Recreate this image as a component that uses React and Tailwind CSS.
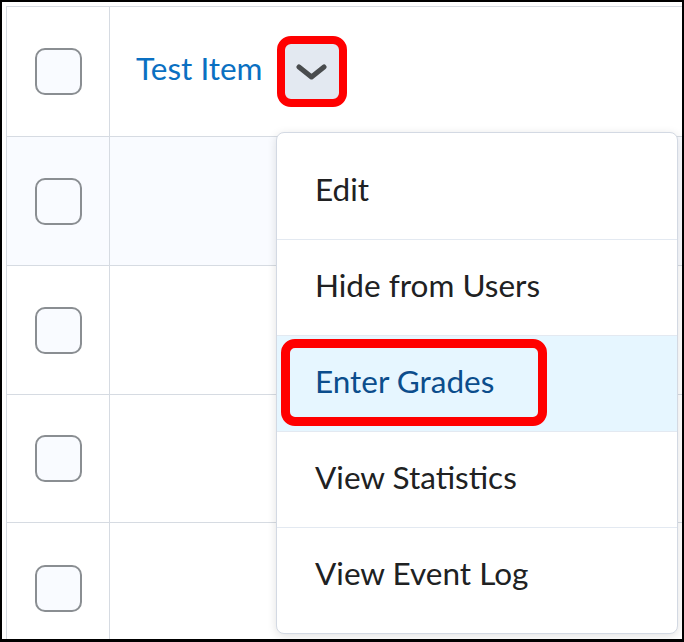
import React from "react";

const rows = [
  { h: "h-[130px]", bg: "bg-white", first: true },
  { h: "h-[129px]", bg: "bg-[#f9fbff]" },
  { h: "h-[129px]", bg: "bg-white" },
  { h: "h-[128px]", bg: "bg-white" },
  { h: "h-[131px]", bg: "bg-white", last: true },
];

function Checkbox() {
  return (
    <div className="w-[47px] h-[47px] rounded-[10px] border-2 border-[#8a8e92] bg-[#f9fbff]" />
  );
}

function Chevron() {
  return (
    <svg width="31" height="17" viewBox="0 0 31 17" fill="none">
      <path d="M3 4 L15.5 14 L28 4" stroke="#494c4e" strokeWidth="5" strokeLinecap="round" strokeLinejoin="round" />
    </svg>
  );
}

const items = ["Edit", "Hide from Users", "Enter Grades", "View Statistics", "View Event Log"];

export default function App() {
  return (
    <div
      className="w-[684px] h-[642px] bg-white border-black border-l-2 border-r-2 border-t-2 border-b-[3px] pl-[4px] pt-[4px] overflow-hidden relative"
      style={{ fontFamily: "Lato, 'Open Sans', sans-serif" }}
    >
      <div className="border-l border-t border-[#d6dbe2] flex flex-col">
        {rows.map((r, i) => (
          <div key={i} className={`flex shrink-0 ${r.h} ${r.bg} ${r.last ? "" : "border-b border-[#d6dbe2]"}`}>
            <div className="w-[103px] border-r border-[#d6dbe2] flex items-center justify-center pl-[1px]">
              <Checkbox />
            </div>
            <div className="flex-1 flex items-center pl-[26px]">
              {r.first && (
                <div className="flex items-center">
                  <span className="text-[31.5px] leading-none text-[#0a70c2] pb-[6px]">Test Item</span>
                  <div className="ml-[14px] w-[70px] h-[71px] rounded-[14px] border-[8px] border-[#ff0000] bg-[#e3e9f1] flex items-center justify-center">
                    <Chevron />
                  </div>
                </div>
              )}
            </div>
          </div>
        ))}
      </div>

      <div className="absolute left-[274px] top-[130px] w-[402px] rounded-[8px] border border-[#d3d9e3] bg-white shadow-[0_2px_10px_rgba(0,0,0,0.12)] pt-[11px] pb-[9px]">
        {items.map((t, i) => {
          const hl = t === "Enter Grades";
          return (
            <div
              key={t}
              className={`relative h-[96px] flex items-center pl-[38px] ${i < items.length - 1 ? "border-b border-[#e3e9f1]" : ""} ${hl ? "bg-[#e6f6ff]" : ""}`}
            >
              <span className={`text-[31.5px] leading-none pb-[4px] ${hl ? "text-[#0b4d8c]" : "text-[#202122]"}`}>{t}</span>
              {hl && (
                <div className="absolute left-[4px] top-[3px] w-[266px] h-[87px] rounded-[14px] border-[9px] border-[#ff0000]" />
              )}
            </div>
          );
        })}
      </div>
    </div>
  );
}
